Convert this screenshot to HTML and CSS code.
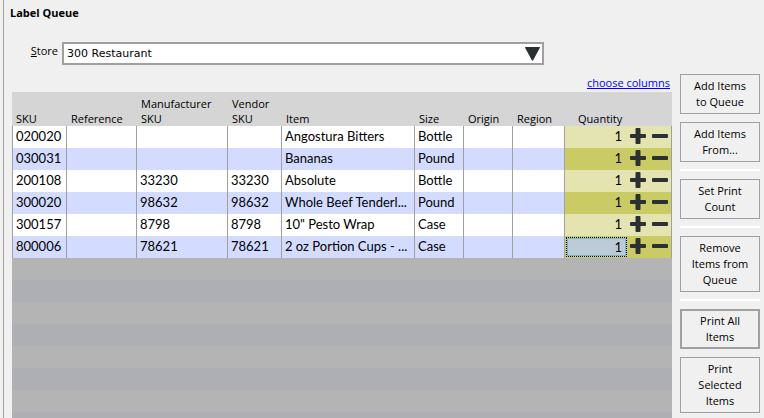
FILE: index.html
```html
<!DOCTYPE html>
<html lang="en">
<head>
<meta charset="utf-8">
<title>Label Queue</title>
<link rel="stylesheet" href="styles.css">
</head>
<body>
<svg class="defs" aria-hidden="true">
  <symbol id="plus" viewBox="0 0 16 16"><path d="M6.500 0h3q1 0 1 1v5h4.500q1 0 1 1v2q0 1-1 1h-4.500v5q0 1-1 1h-3q-1 0-1-1v-5h-4.500q-1 0-1-1v-2q0-1 1-1h4.500v-5q0-1 1-1z" fill="#2b3133"/></symbol>
  <symbol id="minus" viewBox="0 0 16 16"><rect x="0" y="6" width="16" height="4" rx="1" fill="#2b3133"/></symbol>
</svg>
<main class="panel">
  <h1 class="title">Label Queue</h1>
  <div class="store">
    <label class="store-label" for="store"><u>S</u>tore</label>
    <div class="combo">
      <select id="store" class="combo-field"><option>300 Restaurant</option></select>
      <svg class="combo-arrow" viewBox="0 0 15 14" aria-hidden="true"><path d="M0.500 0h14q.7 0 .4.800L8.300 13q-.8 1.300-1.600 0L.1.800Q-.2 0 .5 0z" fill="#2b3133"/></svg>
    </div>
  </div>
  <div class="content">
    <section class="queue">
      <a class="choose" href="#columns">choose columns</a>
      <table class="grid">
        <colgroup><col class="c-sku"><col class="c-ref"><col class="c-man"><col class="c-ven"><col><col class="c-size"><col class="c-size"><col class="c-region"><col class="c-qty"></colgroup>
        <thead>
          <tr><th>SKU</th><th>Reference</th><th>Manufacturer<br>SKU</th><th>Vendor<br>SKU</th><th>Item</th><th>Size</th><th>Origin</th><th>Region</th><th class="qty-head">Quantity</th></tr>
        </thead>
        <tbody>
          <tr><td>020020</td><td></td><td></td><td></td><td>Angostura Bitters</td><td>Bottle</td><td></td><td></td><td class="qty"><div class="qty-row"><input class="qty-field" aria-label="Quantity" value="1"><button class="step" aria-label="Increase"><svg class="icon"><use href="#plus"/></svg></button><button class="step" aria-label="Decrease"><svg class="icon"><use href="#minus"/></svg></button></div></td></tr>
          <tr><td>030031</td><td></td><td></td><td></td><td>Bananas</td><td>Pound</td><td></td><td></td><td class="qty"><div class="qty-row"><input class="qty-field" aria-label="Quantity" value="1"><button class="step" aria-label="Increase"><svg class="icon"><use href="#plus"/></svg></button><button class="step" aria-label="Decrease"><svg class="icon"><use href="#minus"/></svg></button></div></td></tr>
          <tr><td>200108</td><td></td><td>33230</td><td>33230</td><td>Absolute</td><td>Bottle</td><td></td><td></td><td class="qty"><div class="qty-row"><input class="qty-field" aria-label="Quantity" value="1"><button class="step" aria-label="Increase"><svg class="icon"><use href="#plus"/></svg></button><button class="step" aria-label="Decrease"><svg class="icon"><use href="#minus"/></svg></button></div></td></tr>
          <tr><td>300020</td><td></td><td>98632</td><td>98632</td><td>Whole Beef Tenderl...</td><td>Pound</td><td></td><td></td><td class="qty"><div class="qty-row"><input class="qty-field" aria-label="Quantity" value="1"><button class="step" aria-label="Increase"><svg class="icon"><use href="#plus"/></svg></button><button class="step" aria-label="Decrease"><svg class="icon"><use href="#minus"/></svg></button></div></td></tr>
          <tr><td>300157</td><td></td><td>8798</td><td>8798</td><td>10" Pesto Wrap</td><td>Case</td><td></td><td></td><td class="qty"><div class="qty-row"><input class="qty-field" aria-label="Quantity" value="1"><button class="step" aria-label="Increase"><svg class="icon"><use href="#plus"/></svg></button><button class="step" aria-label="Decrease"><svg class="icon"><use href="#minus"/></svg></button></div></td></tr>
          <tr><td>800006</td><td></td><td>78621</td><td>78621</td><td>2 oz Portion Cups - ...</td><td>Case</td><td></td><td></td><td class="qty"><div class="qty-row"><input class="qty-field selected" aria-label="Quantity" value="1"><button class="step" aria-label="Increase"><svg class="icon"><use href="#plus"/></svg></button><button class="step" aria-label="Decrease"><svg class="icon"><use href="#minus"/></svg></button></div></td></tr>
        </tbody>
      </table>
      <div class="empty-rows"></div>
    </section>
    <aside class="actions">
      <button class="action">Add Items to Queue</button>
      <button class="action">Add Items From...</button>
      <hr class="divider">
      <button class="action">Set Print Count</button>
      <hr class="divider">
      <button class="action">Remove Items from Queue</button>
      <hr class="divider">
      <button class="action primary">Print All Items</button>
      <button class="action">Print Selected Items</button>
    </aside>
  </div>
</main>
</body>
</html>
```
FILE: styles.css
```css
* { box-sizing: border-box; }
body {
  margin: 0;
  background: #f0f0f0;
  color: #000;
  font: 11px/16px "Open Sans", "Noto Sans", sans-serif;
}
.defs { position: absolute; width: 0; height: 0; }
.panel {
  display: flex;
  flex-direction: column;
  height: 100vh;
  overflow: hidden;
  margin-left: 3px;
  padding: 5px 4px 0 8px;
  border-left: 1px solid #a0a0a0;
}
.title { margin: 0 0 0 -2px; font-size: 11px; line-height: 16px; font-weight: 700; }
.store {
  display: flex;
  align-items: flex-start;
  gap: 4px;
  margin: 21px 216px 9px 0;
}
.store-label { width: 46px; padding-top: 1px; text-align: right; }
.combo { position: relative; flex: 1; }
.combo-field {
  display: block;
  width: 100%;
  height: 23px;
  padding: 0 3px;
  appearance: none;
  border: 2px solid #a0a0a0;
  border-radius: 0;
  background: #fff;
  color: #000;
  font: 11px "DejaVu Sans", sans-serif;
}
.combo-arrow { position: absolute; top: 5px; right: 4px; width: 15px; height: 14px; pointer-events: none; }
.content { display: flex; flex: 1; gap: 8px; min-height: 0; }
.queue { display: flex; flex: 1; flex-direction: column; min-width: 0; }
.choose { align-self: flex-end; margin: 1px 2px 1px 0; color: #00f; }
.grid { width: 100%; table-layout: fixed; border-collapse: separate; border-spacing: 0; }
.c-sku, .c-ven { width: 54px; }
.c-ref { width: 70px; }
.c-man { width: 91px; }
.c-size { width: 49px; }
.c-region { width: 52px; }
.c-qty { width: 108px; }
th {
  height: 34px;
  padding: 0 0 0 5px;
  background: #d5d5d5;
  font-size: 11px;
  line-height: 15px;
  font-weight: 400;
  text-align: left;
  vertical-align: bottom;
  white-space: nowrap;
}
th:first-child { padding-left: 4px; }
th.qty-head { padding-left: 14px; }
td {
  height: 22px;
  padding: 0 0 2px 3px;
  border-left: 1px solid #a0a0a0;
  background: #fff;
  font: 13px/20px Lato, sans-serif;
  white-space: nowrap;
  overflow: hidden;
}
tbody tr:nth-child(even) td { background: #d3dcff; }
tbody .qty { padding: 0 3px 0 1px; border-right: 1px solid #a0a0a0; background: #e4e4b0; }
tbody tr:nth-child(even) .qty { background: #cbcb65; }
.qty-row { display: flex; align-items: center; gap: 3px; }
.qty-field {
  flex: 1;
  min-width: 0;
  height: 22px;
  padding: 0 5px 2px 0;
  border: 0;
  background: transparent;
  color: #000;
  font: 13px/20px Lato, sans-serif;
  text-align: right;
}
.qty-field.selected { height: 20px; padding: 0 4px 0 0; border: 1px dotted #000; background: #bccbd8; box-shadow: inset 0 0 0 1px #82b3b4; }
.step { display: block; padding: 0 0 2px; border: 0; background: none; }
.step + .step { margin-left: 3px; }
.icon { display: block; width: 16px; height: 16px; }
.empty-rows { flex: 1; background: repeating-linear-gradient(#b4b4b4 0 22px, #aeafb4 22px 44px); }
.actions { display: flex; flex-direction: column; gap: 8px; width: 80px; }
.action {
  padding: 3px 8px;
  border: 1px solid #a0a0a0;
  background: #f0f0f0;
  color: #000;
  font: 11px/16px "Open Sans", "Noto Sans", sans-serif;
}
.primary { padding: 2px 7px; border-width: 2px; }
.divider { width: 100%; height: 2px; margin: -1px 0 0; border: 0; background: #fff; }
```
